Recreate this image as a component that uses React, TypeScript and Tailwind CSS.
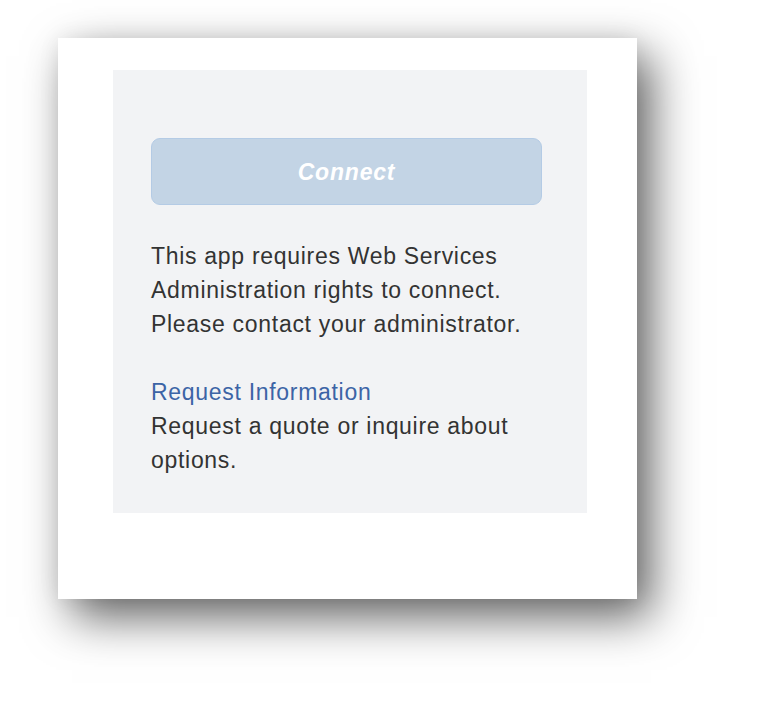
export default function App() {
  return (
    <div className="w-[776px] h-[702px] bg-white pt-[38px] pl-[58px]" style={{ fontFamily: '"Liberation Sans", Arial, sans-serif' }}>
      <div className="w-[579px] h-[561px] bg-white pt-[32px] pl-[55px] shadow-[14px_18px_44px_rgba(0,0,0,0.62),0_0_22px_rgba(0,0,0,0.06)]">
        <div className="w-[474px] h-[443px] bg-[#f2f3f5] pt-[68px] pl-[38px]">
          <button className="w-[391px] h-[67px] rounded-[9px] bg-[#c3d4e5] border border-[#b4cbe5] text-white text-[23px] font-bold italic tracking-[0.8px] pt-[1px]">
            Connect
          </button>
          <div className="mt-[34px] text-[23px] leading-[34px] text-[#333333] tracking-[0.7px] w-[400px]">
            <p>This app requires Web Services Administration rights to connect. Please contact your administrator.</p>
            <p className="mt-[34px] text-[#3c64a6]">Request Information</p>
            <p>Request a quote or inquire about options.</p>
          </div>
        </div>
      </div>
    </div>
  );
}
